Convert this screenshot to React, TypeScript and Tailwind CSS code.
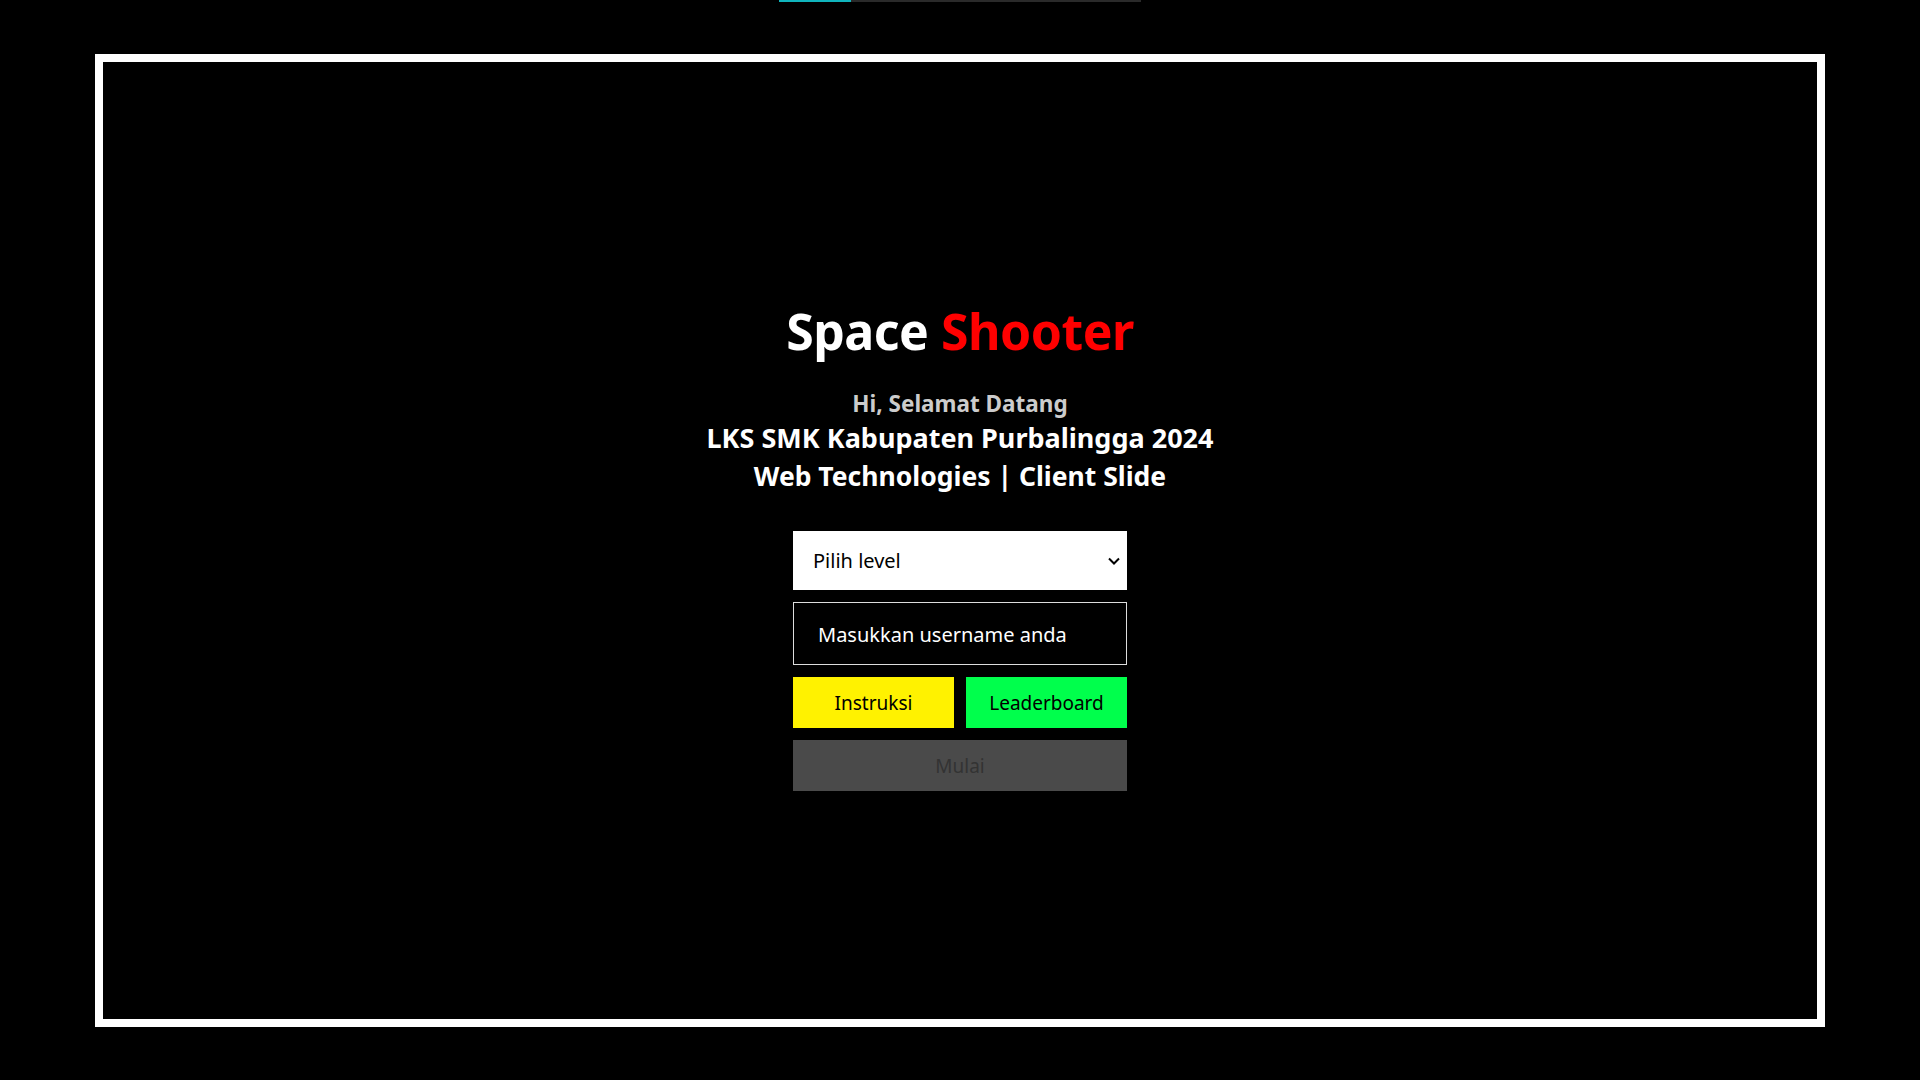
import { useState } from "react";

const FONT = { fontFamily: '"Noto Sans", "Open Sans", sans-serif' };

export default function App() {
  const [level, setLevel] = useState("");
  const [username, setUsername] = useState("");

  return (
    <div className="relative h-screen w-full bg-black overflow-hidden" style={FONT}>
      {/* Top progress bar */}
      <div className="absolute top-0 left-[779px] h-[2px] w-[362px] bg-[#2a2a2a]">
        <div className="h-full w-[72px] bg-[#10b4bc]" />
      </div>

      <div className="flex h-full items-center justify-center">
        <div className="flex h-[973px] w-[1730px] flex-col items-center justify-center border-8 border-white pt-[11px]">
          {/* Title */}
          <h1 className="text-[50px] leading-[60px] font-bold text-white tracking-[-0.5px]">
            Space <span className="text-[#ff0000]">Shooter</span>
          </h1>

          <div className="mt-[28px] flex flex-col items-center font-bold">
            <p className="text-[22.5px] leading-[30px] text-[#cccccc]">Hi, Selamat Datang</p>
            <p className="text-[27px] leading-[38px] text-white">LKS SMK Kabupaten Purbalingga 2024</p>
            <p className="text-[26.5px] leading-[38px] text-white">Web Technologies | Client Slide</p>
          </div>

          {/* Form */}
          <div className="mt-[36px] flex w-[334px] flex-col gap-[12px]">
            <div className="relative h-[59px] bg-white">
              <select
                value={level}
                onChange={(e) => setLevel(e.target.value)}
                className="h-full w-full appearance-none bg-transparent pl-[20px] pt-[2px] text-[20px] text-black outline-none"
              >
                <option value="">Pilih level</option>
                <option value="easy">Easy</option>
                <option value="medium">Medium</option>
                <option value="hard">Hard</option>
              </select>
              <svg
                className="pointer-events-none absolute right-[7px] top-[26px]"
                width="12"
                height="8"
                viewBox="0 0 12 8"
                fill="none"
              >
                <path d="M1 1.5L6 6.5L11 1.5" stroke="black" strokeWidth="2" />
              </svg>
            </div>

            <input
              value={username}
              onChange={(e) => setUsername(e.target.value)}
              placeholder="Masukkan username anda"
              className="h-[63px] w-full border border-[#dddddd] bg-black px-[24px] pt-[2px] text-[20px] text-white outline-none placeholder:text-white"
            />

            <div className="grid grid-cols-2 gap-[12px]">
              <button className="h-[51px] bg-[#fff200] pt-[2px] text-[19px] text-black">Instruksi</button>
              <button className="h-[51px] bg-[#00ff4c] pt-[2px] text-[19px] text-black">Leaderboard</button>
            </div>

            <button disabled className="h-[51px] bg-[#4a4a4a] pt-[3px] text-[19px] text-[#333333]">
              Mulai
            </button>
          </div>
        </div>
      </div>
    </div>
  );
}
